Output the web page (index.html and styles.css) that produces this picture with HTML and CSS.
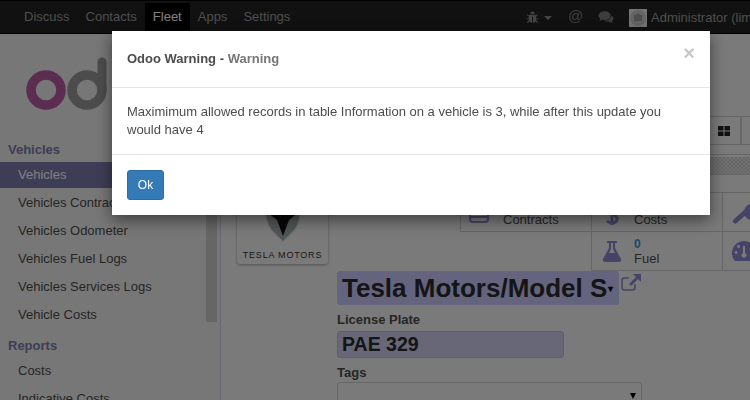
FILE: index.html
```html
<!DOCTYPE html>
<html lang="en">
<head>
  <meta charset="UTF-8" />
  <title>Odoo Warning</title>
  <link rel="stylesheet" href="styles.css">
</head>
<body>
  <div class="app">
    <nav class="navbar">
      <ul class="nav-apps">
        <li>Discuss</li>
        <li>Contacts</li>
        <li class="active">Fleet</li>
        <li>Apps</li>
        <li>Settings</li>
      </ul>
      <div class="nav-right">
        <svg class="bug" width="13" height="13" viewBox="0 0 13 14"><path d="M4 3a2.500 2.500 0 0 1 5 0zM3 4h7v1l2-1.500.6.8L10.500 6v2h2.500v1h-2.500v1l2 2-.7.8L9.700 11A3 3 0 0 1 7 13V6H6v7a3 3 0 0 1-2.700-2L1.200 12.800.5 12l2-2V9H0V8h2.500V6L.4 4.300 1 3.500 3 5z"/></svg>
        <span class="caret"></span>
        <span class="at">@</span>
        <svg class="comments" width="16" height="13" viewBox="0 0 16 14"><ellipse cx="6.500" cy="5" rx="6.500" ry="4.700"/><path d="M2 7.500 1 11l4-2.500zM14 5.200q2 1.300 2 3 0 1.800-1.700 2.800l.8 2.500-3.100-1.900Q8.500 11.800 6.500 10.500 12.500 10.500 14 5.200z"/></svg>
        <span class="avatar">
          <svg width="18" height="18" viewBox="0 0 18 18"><circle cx="9" cy="9" r="8" fill="#c8c8c8"/><path fill="#9a9a9a" d="M5 6h2l1-1.500h2L11 6h2v6H5z"/></svg>
        </span>
        <span class="user">Administrator (lim</span>
      </div>
    </nav>

    <div class="content">
      <aside class="sidebar">
        <div class="side-scroll">
          <svg class="logo" width="92" height="62" viewBox="0 0 92 62">
            <circle cx="20" cy="39" r="15" fill="none" stroke="#b85aa0" stroke-width="9.500"/>
            <circle cx="61" cy="39" r="15" fill="none" stroke="#999" stroke-width="9.500"/>
            <path d="M76 39V11" fill="none" stroke="#999" stroke-width="9" stroke-linecap="round"/>
          </svg>
          <h4 class="side-title">Vehicles</h4>
          <a class="side-link active">Vehicles</a>
          <a class="side-link">Vehicles Contracts</a>
          <a class="side-link">Vehicles Odometer</a>
          <a class="side-link">Vehicles Fuel Logs</a>
          <a class="side-link">Vehicles Services Logs</a>
          <a class="side-link">Vehicle Costs</a>
          <h4 class="side-title">Reports</h4>
          <a class="side-link">Costs</a>
          <a class="side-link">Indicative Costs</a>
        </div>
        <div class="scrollbar"><div class="thumb"></div></div>
      </aside>

      <main class="main">
        <div class="control-panel">
          <div class="view-btns">
            <button class="view-btn">
              <svg width="12" height="10" viewBox="0 0 12 10"><path d="M0 0h5.500v4.500H0zM6.500 0H12v4.500H6.500zM0 5.500h5.500V10H0zM6.500 5.500H12V10H6.500z"/></svg>
            </button>
            <button class="view-btn"></button>
          </div>
        </div>
        <div class="statusbar"></div>

        <div class="sheet">
          <div class="sheet-head">
            <div class="image-card">
              <svg width="38" height="44" viewBox="0 0 38 44">
                <path d="M1 2h36q1 18-6 29L19 43 7 31Q0 20 1 2z" fill="#a4aaaa" stroke="#e4e8e8" stroke-width="1.500"/>
                <path d="M4 14h30l-9 7-6 16-6-16z" fill="#111"/>
              </svg>
              <span class="tesla-name">TESLA MOTORS</span>
            </div>
            <div class="stat-grid">
              <div class="stat">
                <svg class="stat-icon contracts" width="20" height="16" viewBox="0 0 20 16"><rect x="1" y="1" width="18" height="14" rx="3" fill="none" stroke="#8a89d0" stroke-width="2"/><path d="M1 10h18" stroke="#8a89d0" stroke-width="2"/></svg>
                <span class="stat-text"><b>&nbsp;</b>Contracts</span>
              </div>
              <div class="stat">
                <svg class="stat-icon costs" width="20" height="22" viewBox="0 0 20 22"><path d="M15 3Q5 1 5 7q0 3 5 4 6 2 5 6-1 3-5 3-3 0-5-2" fill="none" stroke="#8a89d0" stroke-width="3"/><path d="M10 0v22" stroke="#8a89d0" stroke-width="3"/></svg>
                <span class="stat-text"><b>&nbsp;</b>Costs</span>
              </div>
              <div class="stat">
                <svg class="stat-icon" width="24" height="26" viewBox="0 0 24 26"><path d="M2.500 22l10-9" stroke="#8a89d0" stroke-width="5" stroke-linecap="round"/><path d="M19 5a8 8 0 1 0 .1 0zM24 9h-5v6h5z" fill="#8a89d0" fill-rule="evenodd"/></svg>
              </div>
              <div class="stat blank"></div>
              <div class="stat">
                <svg class="stat-icon" width="20" height="21" viewBox="0 0 20 21"><path fill-rule="evenodd" fill="#8a89d0" d="M5 0h10v2h-2v5l6 11q1 3-2 3H3q-3 0-2-3L7 7V2H5zM9 2v6l-2 4h6l-2-4V2z"/></svg>
                <span class="stat-text"><b>0</b>Fuel</span>
              </div>
              <div class="stat">
                <svg class="stat-icon gauge" width="24" height="20" viewBox="0 0 24 20"><path d="M12 0a12 12 0 0 1 12 12q0 5-3 8H3q-3-3-3-8A12 12 0 0 1 12 0zM11 5v7a2.500 2.500 0 1 0 2 0V5zM4 10a1.500 1.500 0 1 0 .1 0zM20 10a1.500 1.500 0 1 0 .1 0zM6.500 4a1.500 1.500 0 1 0 .1 0z" fill="#8a89d0" fill-rule="evenodd"/></svg>
              </div>
            </div>
          </div>

          <div class="form">
            <div class="title-row">
              <div class="title-field">
                <span class="title-value">Tesla Motors/Model S</span>
                <span class="small-caret">▾</span>
              </div>
              <svg class="ext-link" width="20" height="18" viewBox="0 0 20 18"><path d="M8 4H3.500Q1 4 1 6.500v7Q1 16 3.500 16h8q2.500 0 2.500-2.500V10" fill="none" stroke="#8a89d0" stroke-width="1.600"/><path d="M12 0h8v8l-3-3-7 7-2-2 7-7z" fill="#8a89d0"/></svg>
            </div>
            <label class="field-label plate-label">License Plate</label>
            <div class="plate-field">PAE 329</div>
            <label class="field-label tags-label">Tags</label>
            <div class="tags-field"><span class="tags-caret"></span></div>
          </div>
        </div>
      </main>
    </div>
  </div>

  <div class="backdrop"></div>

  <div class="modal">
    <header class="modal-header">
      <h4 class="modal-title"><b>Odoo Warning</b> <span class="dash">-</span> <span class="muted">Warning</span></h4>
      <span class="close">×</span>
    </header>
    <div class="modal-body">Maximimum allowed records in table Information on a vehicle is 3, while after this update you would have 4</div>
    <footer class="modal-footer">
      <button class="btn-ok">Ok</button>
    </footer>
  </div>
</body>
</html>
```

FILE: styles.css
```css
* {
  box-sizing: border-box;
}

html,
body {
  margin: 0;
  height: 400px;
  overflow: hidden;
}

body {
  font-family: "Liberation Sans", Arial, sans-serif;
  font-size: 13px;
  color: #4c4c4c;
  background: #f5f5f5;
}

.app {
  height: 400px;
  display: flex;
  flex-direction: column;
  overflow: hidden;
}

/* navbar */
.navbar {
  flex: 0 0 34px;
  display: flex;
  background: #222;
  border-top: 1px solid #000;
  border-bottom: 1px solid #000;
  padding: 2px 0 0 16px;
  white-space: nowrap;
  overflow: hidden;
}

.nav-apps {
  flex: 0 0 510px;
  display: flex;
  list-style: none;
  margin: 0;
  padding: 0;
}

.nav-apps li {
  padding: 0 8px;
  height: 28px;
  line-height: 27px;
  color: #9d9d9d;
}

.nav-apps li.active {
  background: #000;
  color: #fff;
}

.nav-right {
  flex: none;
  display: flex;
  align-items: center;
  height: 28px;
}

.nav-right svg {
  flex: none;
  fill: #8a8a8a;
}

.nav-right .at {
  width: 15px;
  margin: -3px 0 0 16px;
  font-size: 15px;
  color: #7a7a7a;
}

.nav-right .comments {
  margin-left: 15px;
  fill: #7a7a7a;
}

.caret {
  width: 0;
  height: 0;
  margin: 2px 0 0 5px;
  border-left: 4px solid transparent;
  border-right: 4px solid transparent;
  border-top: 4px solid #8a8a8a;
}

.avatar {
  flex: none;
  width: 18px;
  height: 18px;
  margin: 2px 0 0 15px;
  display: block;
  background: #e8e8e8;
}

.user {
  margin-left: 4px;
  color: #9d9d9d;
}

.content {
  flex: 1;
  display: flex;
  min-height: 0;
}

/* sidebar */
.sidebar {
  flex: 0 0 221px;
  display: flex;
  background: #f0eeee;
  border-right: 1px solid #cfcfe0;
  overflow: hidden;
}

.side-scroll {
  width: 206px;
}

.scrollbar {
  width: 11px;
  height: 288px;
}

.thumb {
  height: 288px;
  background: #cdcdcd;
}

.logo {
  display: block;
  margin: 17px 0 20px 26px;
}

.side-title {
  margin: 0;
  padding: 0 8px;
  height: 28px;
  line-height: 34px;
  font-size: 13px;
  font-weight: bold;
  color: #7c7bad;
}

.side-link {
  display: block;
  height: 28px;
  line-height: 27px;
  padding-left: 18px;
  color: #4c4c4c;
  white-space: nowrap;
}

.side-link.active {
  height: 26px;
  margin: 1px 0;
  line-height: 25px;
  background: #7c7bad;
  color: #fff;
}

/* main */
.main {
  flex: 1;
  min-width: 0;
  background: #f5f5f5;
  overflow: hidden;
}

.control-panel {
  height: 121px;
  padding: 82px 0 0 0;
  border-bottom: 1px solid #ccc;
}

.view-btns {
  display: flex;
  justify-content: flex-end;
  margin-right: -26px;
}

.view-btn {
  width: 35px;
  height: 29px;
  padding: 0;
  display: flex;
  align-items: center;
  justify-content: center;
  background: #f5f5f5;
  border: 1px solid #ccc;
}

.view-btn svg {
  fill: #222;
}

.statusbar {
  height: 18px;
  margin-top: 2px;
  border-bottom: 1px solid #ccc;
  background-color: #d9d9d9;
  background-image: repeating-conic-gradient(#cfcfcf 0 25%, #e2e2e2 0 50%);
  background-size: 4px 4px;
}

.sheet {
  padding-left: 15px;
}

.sheet-head {
  display: flex;
  justify-content: space-between;
  height: 95px;
}

.image-card {
  flex: none;
  width: 91px;
  height: 89px;
  margin-left: 1px;
  padding-top: 24px;
  display: flex;
  flex-direction: column;
  align-items: center;
  background: #f5f5f5;
  border-radius: 3px;
  box-shadow: 0 1px 3px rgba(0, 0, 0, 0.35);
}

.tesla-name {
  margin-top: 7px;
  font-size: 9px;
  line-height: 11px;
  letter-spacing: 0.8px;
  color: #333;
  white-space: nowrap;
}

.stat-grid {
  flex: 0 0 auto;
  display: grid;
  grid-template-columns: 131px 131px 131px;
  grid-template-rows: 39px 39px;
  width: 393px;
  height: 78px;
  margin: 17px -103px 0 0;
  border-top: 1px solid #ccc;
}

.stat {
  display: flex;
  align-items: center;
  padding-left: 10px;
  border-left: 1px solid #ccc;
  border-bottom: 1px solid #ccc;
}

.stat.blank {
  border: 0;
}

.stat-icon {
  flex: none;
  margin-right: 12px;
}

.stat-icon.contracts {
  margin: 6px 14px 0 -2px;
}

.stat-icon.costs {
  margin-top: 4px;
}

.stat-icon.gauge {
  margin: 0 0 0 -1px;
}

.stat-text {
  display: flex;
  flex-direction: column;
  line-height: 15px;
  color: #4c4c4c;
}

.stat-text b {
  margin-bottom: -1px;
  color: #2a9ae0;
  font-size: 12px;
}

.form {
  padding-left: 101px;
  margin-top: 1px;
}

.title-row {
  display: flex;
  align-items: flex-start;
}

.title-field {
  width: 282px;
  height: 34px;
  padding-left: 5px;
  display: flex;
  align-items: center;
  background: #c8c8ff;
  border-radius: 3px;
  font-size: 26px;
  font-weight: bold;
  color: #2a2a2a;
  white-space: nowrap;
  overflow: hidden;
}

.small-caret {
  font-size: 10px;
  margin-left: 1px;
  color: #111;
}

.ext-link {
  margin: 3px 0 0 2px;
}

.field-label {
  display: block;
  font-weight: bold;
  line-height: 19px;
  color: #4c4c4c;
}

.plate-label {
  margin: 5px 0 2px;
}

.plate-field {
  width: 227px;
  height: 27px;
  padding-left: 4px;
  line-height: 25px;
  background: #cfcfee;
  border: 1px solid #bbbbdd;
  border-radius: 3px;
  font-size: 19.500px;
  font-weight: bold;
  color: #2a2a2a;
}

.tags-label {
  margin-top: 5px;
}

.tags-field {
  position: relative;
  width: 305px;
  height: 30px;
  border: 1px solid #ccc;
  border-radius: 3px;
}

.tags-caret {
  position: absolute;
  right: 5px;
  top: 10px;
  border-left: 3px solid transparent;
  border-right: 3px solid transparent;
  border-top: 6px solid #000;
}

/* modal, lies over the page */
.backdrop {
  position: fixed;
  inset: 0;
  background: rgba(0, 0, 0, 0.5);
}

.modal {
  position: fixed;
  left: 112px;
  top: 31px;
  width: 598px;
  background: #fff;
  box-shadow: 0 5px 15px rgba(0, 0, 0, 0.5);
}

.modal-header {
  height: 57px;
  padding: 0 15px 2px;
  display: flex;
  align-items: center;
  justify-content: space-between;
  border-bottom: 1px solid #e5e5e5;
}

.modal-title {
  margin: 0;
  font-size: 13px;
  font-weight: normal;
  color: #4c4c4c;
}

.dash {
  font-weight: bold;
}

.muted {
  font-weight: bold;
  color: #777;
}

.close {
  margin-top: -10px;
  font-size: 20px;
  font-weight: bold;
  line-height: 20px;
  color: #c8c8c8;
}

.modal-body {
  padding: 15px;
  height: 67px;
  line-height: 18px;
  color: #4c4c4c;
  border-bottom: 1px solid #e5e5e5;
}

.modal-footer {
  padding: 15px;
}

.btn-ok {
  display: block;
  width: 37px;
  height: 30px;
  padding: 0;
  font-family: inherit;
  font-size: 12px;
  color: #fff;
  background: #337ab7;
  border: 1px solid #2e6da4;
  border-radius: 3px;
}
```
